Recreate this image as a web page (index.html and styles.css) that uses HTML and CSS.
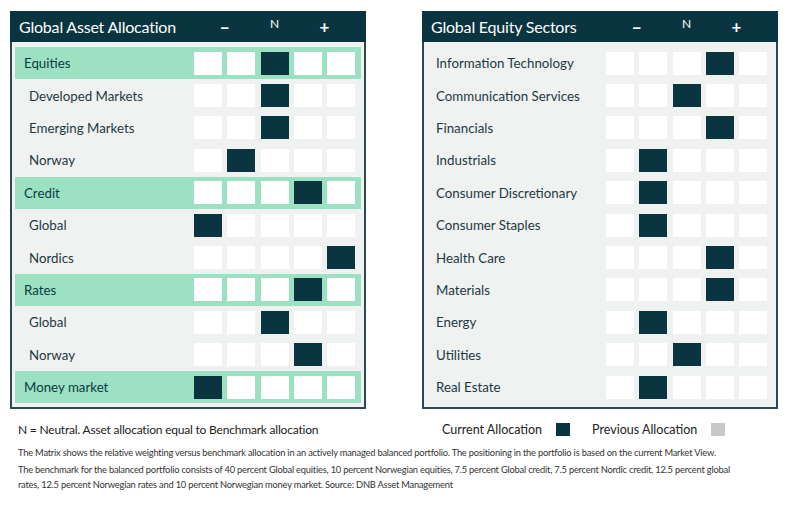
FILE: index.html
```html
<!DOCTYPE html>
<html lang="en">
<head>
<meta charset="utf-8">
<title>Asset Allocation Matrix</title>
<link rel="stylesheet" href="styles.css">
</head>
<body>
<div class="page">
  <div class="panels">
    <section class="panel">
      <div class="panel-head">
        <div class="panel-title">Global Asset Allocation</div>
        <div class="scale"><span class="minus">–</span><span class="neutral">N</span><span class="plus">+</span></div>
      </div>
      <div class="panel-body">
        <div class="row group"><div class="label">Equities</div><div class="cells"><i></i><i></i><i class="on"></i><i></i><i></i></div></div>
        <div class="row"><div class="label">Developed Markets</div><div class="cells"><i></i><i></i><i class="on"></i><i></i><i></i></div></div>
        <div class="row"><div class="label">Emerging Markets</div><div class="cells"><i></i><i></i><i class="on"></i><i></i><i></i></div></div>
        <div class="row"><div class="label">Norway</div><div class="cells"><i></i><i class="on"></i><i></i><i></i><i></i></div></div>
        <div class="row group"><div class="label">Credit</div><div class="cells"><i></i><i></i><i></i><i class="on"></i><i></i></div></div>
        <div class="row"><div class="label">Global</div><div class="cells"><i class="on"></i><i></i><i></i><i></i><i></i></div></div>
        <div class="row"><div class="label">Nordics</div><div class="cells"><i></i><i></i><i></i><i></i><i class="on"></i></div></div>
        <div class="row group"><div class="label">Rates</div><div class="cells"><i></i><i></i><i></i><i class="on"></i><i></i></div></div>
        <div class="row"><div class="label">Global</div><div class="cells"><i></i><i></i><i class="on"></i><i></i><i></i></div></div>
        <div class="row"><div class="label">Norway</div><div class="cells"><i></i><i></i><i></i><i class="on"></i><i></i></div></div>
        <div class="row group"><div class="label">Money market</div><div class="cells"><i class="on"></i><i></i><i></i><i></i><i></i></div></div>
      </div>
    </section>
    <section class="panel sectors">
      <div class="panel-head">
        <div class="panel-title">Global Equity Sectors</div>
        <div class="scale"><span class="minus">–</span><span class="neutral">N</span><span class="plus">+</span></div>
      </div>
      <div class="panel-body">
        <div class="row"><div class="label">Information Technology</div><div class="cells"><i></i><i></i><i></i><i class="on"></i><i></i></div></div>
        <div class="row"><div class="label">Communication Services</div><div class="cells"><i></i><i></i><i class="on"></i><i></i><i></i></div></div>
        <div class="row"><div class="label">Financials</div><div class="cells"><i></i><i></i><i></i><i class="on"></i><i></i></div></div>
        <div class="row"><div class="label">Industrials</div><div class="cells"><i></i><i class="on"></i><i></i><i></i><i></i></div></div>
        <div class="row"><div class="label">Consumer Discretionary</div><div class="cells"><i></i><i class="on"></i><i></i><i></i><i></i></div></div>
        <div class="row"><div class="label">Consumer Staples</div><div class="cells"><i></i><i class="on"></i><i></i><i></i><i></i></div></div>
        <div class="row"><div class="label">Health Care</div><div class="cells"><i></i><i></i><i></i><i class="on"></i><i></i></div></div>
        <div class="row"><div class="label">Materials</div><div class="cells"><i></i><i></i><i></i><i class="on"></i><i></i></div></div>
        <div class="row"><div class="label">Energy</div><div class="cells"><i></i><i class="on"></i><i></i><i></i><i></i></div></div>
        <div class="row"><div class="label">Utilities</div><div class="cells"><i></i><i></i><i class="on"></i><i></i><i></i></div></div>
        <div class="row"><div class="label">Real Estate</div><div class="cells"><i></i><i class="on"></i><i></i><i></i><i></i></div></div>
      </div>
    </section>
  </div>
  <div class="legend">
    <div class="legend-note">N = Neutral. Asset allocation equal to Benchmark allocation</div>
    <div class="legend-keys">
      <span class="key">Current Allocation</span><span class="swatch current"></span>
      <span class="key prev">Previous Allocation</span><span class="swatch previous"></span>
    </div>
  </div>
  <p class="note first">The Matrix shows the relative weighting versus benchmark allocation in an actively managed balanced portfolio. The positioning in the portfolio is based on the current Market View.</p>
  <p class="note">The benchmark for the balanced portfolio consists of 40 percent Global equities, 10 percent Norwegian equities, 7.5 percent Global credit, 7.5 percent Nordic credit, 12.5 percent global rates, 12.5 percent Norwegian rates and 10 percent Norwegian money market. Source: DNB Asset Management</p>
</div>
</body>
</html>
```
FILE: styles.css
```css
html, body {
  margin: 0;
  padding: 0;
  background: #ffffff;
}
body {
  font-family: Lato, "Noto Sans", sans-serif;
  color: #0c3540;
}
.page {
  padding: 11px 0 0 10px;
  width: 786px;
}
.panels {
  display: flex;
  gap: 56px;
}
.panel {
  width: 356px;
  height: 398px;
  box-sizing: border-box;
  background: #f0f1f1;
  border: 2px solid #2c4a53;
  border-top: 0;
  display: flex;
  flex-direction: column;
}
.panel-head {
  height: 31px;
  margin: 0 -2px;
  padding: 0 11px 0 9px;
  background: #0a3540;
  color: #ffffff;
  display: flex;
  align-items: center;
}
.panel-title {
  flex: 1;
  font-size: 16px;
  letter-spacing: -0.2px;
}
.scale {
  display: grid;
  grid-template-columns: repeat(5, 28px);
  column-gap: 5.25px;
  font-size: 14px;
  font-weight: 700;
  text-align: center;
}
.scale .minus { grid-column: 1 / 3; font-size: 18px; font-weight: 700; }
.scale .neutral { grid-column: 3; font-weight: 400; font-size: 12px; }
.scale .plus { grid-column: 4 / 6; font-size: 17px; }
.panel-body {
  padding: 5px 3px 0 3px;
}
.row {
  height: 32.4px;
  display: flex;
  align-items: center;
  padding-right: 6px;
}
.row.group {
  background: #9de1c3;
}
.label {
  flex: 1;
  padding-left: 14px;
  font-size: 13.3px;
  color: #1c3a42;
}
.row.group .label,
.sectors .label {
  padding-left: 9px;
}
.row.group .label {
  color: #0c3a44;
}
.cells {
  display: grid;
  grid-template-columns: repeat(5, 28px);
  column-gap: 5.25px;
}
.cells i {
  display: block;
  height: 23px;
  background: #ffffff;
}
.cells i.on {
  background: #0a3540;
}
.legend {
  display: grid;
  grid-template-columns: 424px auto;
  align-items: center;
  margin-top: 13px;
  padding-left: 8px;
  color: #222;
}
.legend-note {
  font-size: 12px;
  letter-spacing: -0.2px;
}
.legend-keys {
  display: flex;
  align-items: center;
  font-size: 12.5px;
}
.key.prev {
  margin-left: 22px;
}
.swatch {
  width: 14px;
  height: 13px;
  margin-left: 14px;
}
.swatch.current { background: #0a3540; }
.swatch.previous { background: #c8c8c8; }
.note {
  margin: 0;
  padding-left: 8px;
  font-size: 9.3px;
  letter-spacing: -0.2px;
  line-height: 15px;
  color: #333;
  width: 728px;
}
.note.first {
  margin-top: 8px;
  margin-bottom: 2px;
}
```
